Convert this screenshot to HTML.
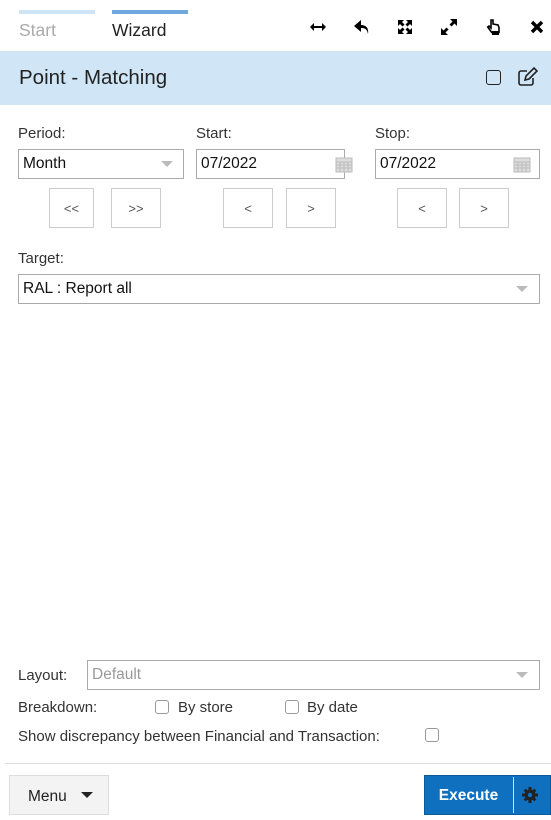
<!DOCTYPE html>
<html><head><style>
*{box-sizing:border-box;margin:0;padding:0}
body{width:551px;height:820px;position:relative;background:#fff;font-family:"Liberation Sans",sans-serif;color:#222;overflow:hidden}
.a{position:absolute}
.lbl{font-size:15px;color:#333}
.box{border:1px solid #aaa;background:#fff;font-size:15.5px;padding-left:4px;display:flex;align-items:center;color:#111}
.btn{border:1px solid #ccc;display:flex;align-items:center;justify-content:center;font-size:13px;color:#555;background:#fff}
.tri{position:absolute;width:0;height:0;border-left:6px solid transparent;border-right:6px solid transparent;border-top:6px solid #bbb}
.cb{position:absolute;width:14px;height:14px;border:1px solid #999;border-radius:3px;background:#fff}
.ic{position:absolute;top:17px;width:20px;height:20px}
</style></head><body>
<div class="a" style="left:19px;top:10px;width:76px;height:4px;background:#cfe5f5"></div>
<div class="a" style="left:112px;top:10px;width:76px;height:4px;background:#6ea8dd"></div>
<div class="a" style="left:19px;top:20px;font-size:17.5px;color:#aaa">Start</div>
<div class="a" style="left:112px;top:20px;font-size:17.5px;color:#222">Wizard</div>
<svg class="ic" style="left:308px" viewBox="0 0 20 20"><path d="M4 10H16" stroke="#000" stroke-width="2"/><path d="M2 10l4-4v8zM18 10l-4-4v8z" fill="#000"/></svg>
<svg class="ic" style="left:352px" viewBox="0 0 20 20"><path d="M9 3L2 9l7 6V11c4 0 6 1 7 6 1-6-2-9-7-9z" fill="#000"/></svg>
<svg class="ic" style="left:395px" viewBox="0 0 20 20"><path d="M3 3h6l-2 2 2.5 2.5-2 2L5 7 3 9zM17 3v6l-2-2-2.5 2.5-2-2L13 5l-2-2zM3 17v-6l2 2 2.5-2.5 2 2L7 15l2 2zM17 17h-6l2-2-2.5-2.5 2-2L15 13l2-2z" fill="#000"/></svg>
<svg class="ic" style="left:439px" viewBox="0 0 20 20"><path d="M11 2h7v7l-2.5-2.5-3 3-2-2 3-3zM9 18H2v-7l2.5 2.5 3-3 2 2-3 3z" fill="#000"/></svg>
<svg class="ic" style="left:483px" viewBox="0 0 20 20"><path d="M8 3v8l-2-2-1.3 1 4 5.5h7.3v-5l-1-2.5-5-1V3z" fill="none" stroke="#000" stroke-width="1.6"/><rect x="9" y="14" width="7" height="4" fill="#000"/></svg>
<svg class="ic" style="left:527px" viewBox="0 0 20 20"><path d="M5 5l10 10M15 5L5 15" stroke="#000" stroke-width="3.4"/></svg>
<div class="a" style="left:0;top:51px;width:551px;height:54px;background:#d0e6f6"></div>
<div class="a" style="left:19px;top:66px;font-size:20.5px;color:#222">Point - Matching</div>
<div class="a" style="left:486px;top:70px;width:15px;height:15px;border:1.6px solid #222;border-radius:3px"></div>
<svg class="a" style="left:517px;top:67px" width="21" height="20" viewBox="0 0 21 20"><path d="M10 4H4a2 2 0 0 0-2 2v10a2 2 0 0 0 2 2h10a2 2 0 0 0 2-2v-5" fill="none" stroke="#222" stroke-width="1.6"/><path d="M8 13l1-4 8-8 3 3-8 8z" fill="none" stroke="#222" stroke-width="1.6"/></svg>

<div class="a lbl" style="left:18px;top:125px">Period:</div>
<div class="a lbl" style="left:196px;top:125px">Start:</div>
<div class="a lbl" style="left:375px;top:125px">Stop:</div>
<div class="a box" style="left:18px;top:149px;width:166px;height:30px">Month<div class="tri" style="left:142px;top:11px"></div></div>
<div class="a box" style="left:196px;top:149px;width:149px;height:30px">07/2022
<svg class="a" style="left:138px;top:5px" width="18" height="18" viewBox="0 0 18 18"><rect x="1" y="3" width="16" height="14" fill="#ddd" stroke="#bbb"/><path d="M1 7h16M1 10h16M1 13h16M5 7v10M9 7v10M13 7v10" stroke="#bbb"/></svg></div>
<div class="a box" style="left:375px;top:149px;width:165px;height:30px">07/2022
<svg class="a" style="left:137px;top:5px" width="18" height="18" viewBox="0 0 18 18"><rect x="1" y="3" width="16" height="14" fill="#ddd" stroke="#bbb"/><path d="M1 7h16M1 10h16M1 13h16M5 7v10M9 7v10M13 7v10" stroke="#bbb"/></svg></div>
<div class="a btn" style="left:49px;top:188px;width:45px;height:40px">&lt;&lt;</div>
<div class="a btn" style="left:111px;top:188px;width:50px;height:40px">&gt;&gt;</div>
<div class="a btn" style="left:223px;top:188px;width:50px;height:40px">&lt;</div>
<div class="a btn" style="left:286px;top:188px;width:50px;height:40px">&gt;</div>
<div class="a btn" style="left:397px;top:188px;width:50px;height:40px">&lt;</div>
<div class="a btn" style="left:459px;top:188px;width:50px;height:40px">&gt;</div>
<div class="a lbl" style="left:18px;top:250px">Target:</div>
<div class="a box" style="left:18px;top:274px;width:522px;height:30px">RAL : Report all<div class="tri" style="left:497px;top:11px"></div></div>

<div class="a lbl" style="left:18px;top:667px">Layout:</div>
<div class="a box" style="left:87px;top:660px;width:453px;height:30px;color:#999">Default<div class="tri" style="left:428px;top:11px"></div></div>
<div class="a lbl" style="left:18px;top:699px">Breakdown:</div>
<div class="cb" style="left:155px;top:700px"></div>
<div class="a lbl" style="left:178px;top:699px">By store</div>
<div class="cb" style="left:285px;top:700px"></div>
<div class="a lbl" style="left:307px;top:699px">By date</div>
<div class="a lbl" style="left:18px;top:728px">Show discrepancy between Financial and Transaction:</div>
<div class="cb" style="left:425px;top:728px"></div>
<div class="a" style="left:5px;top:763px;width:546px;height:1px;background:#ddd"></div>
<div class="a" style="left:9px;top:775px;width:100px;height:40px;background:#f3f3f3;border:1px solid #ddd;font-size:15.5px;padding:12px 0 0 18px">Menu</div>
<div class="tri" style="left:81px;top:792px;border-top-color:#222"></div>
<div class="a" style="left:424px;top:775px;width:127px;height:40px;background:#1070c0;border:1px solid #0c5a9a"></div>
<div class="a" style="left:424px;top:787px;width:89px;text-align:center;color:#fff;font-weight:bold;font-size:15.5px">Execute</div>
<div class="a" style="left:513px;top:777px;width:1px;height:36px;background:#cfe0f0"></div>
<svg class="a" style="left:521px;top:786px" width="18" height="18" viewBox="0 0 18 18"><g fill="#222"><circle cx="9" cy="9" r="5.5"/><path d="M7.5 1h3v3h-3zM7.5 14h3v3h-3zM1 7.5h3v3H1zM14 7.5h3v3h-3zM2.6 4.7l2.1-2.1 2.1 2.1-2.1 2.1zM11.2 13.3l2.1-2.1 2.1 2.1-2.1 2.1zM2.6 13.3l2.1 2.1 2.1-2.1-2.1-2.1zM11.2 4.7l2.1-2.1 2.1 2.1-2.1 2.1z"/></g><circle cx="9" cy="9" r="2.2" fill="#1070c0"/></svg>
</body></html>
